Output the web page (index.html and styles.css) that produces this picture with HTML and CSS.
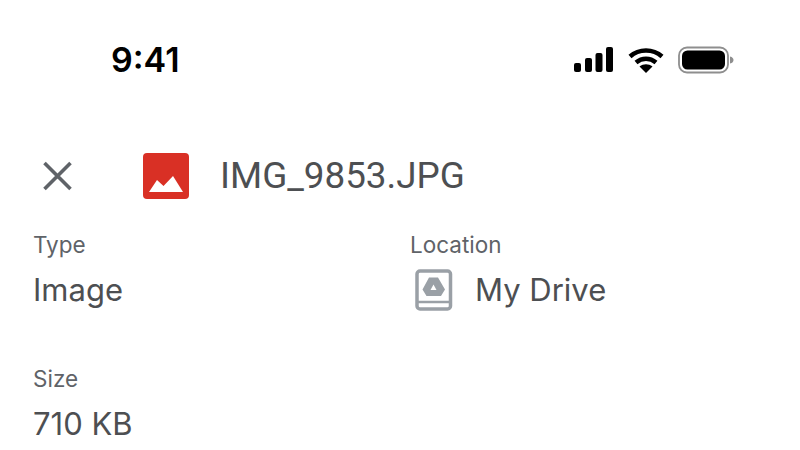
FILE: index.html
```html
<!DOCTYPE html>
<html lang="en">
<head>
<meta charset="utf-8">
<title>File details</title>
<link rel="stylesheet" href="styles.css">
</head>
<body>
<div class="screen">
  <div class="status">
    <span class="time">9:41</span>
    <div class="status-icons">
      <svg class="signal" width="40" height="26" viewBox="0 0 40 26"><rect x="0" y="16" width="7" height="9" rx="2"/><rect x="11" y="11" width="7" height="14" rx="2"/><rect x="21.500" y="6" width="7" height="19" rx="2"/><rect x="32" y="0" width="7" height="25" rx="2"/></svg>
      <svg class="wifi" width="36" height="26" viewBox="0 0 36 26"><path d="M2 9.500C11 1.500 25 1.500 34 9.500" fill="none" stroke="#000" stroke-width="4.500"/><path d="M8 15.500C14 10.500 22 10.500 28 15.500" fill="none" stroke="#000" stroke-width="4.500"/><path d="M11.500 19.500C15.500 16.500 20.500 16.500 24.500 19.500L18 26Z"/></svg>
      <svg class="battery" width="56" height="28" viewBox="0 0 56 28"><rect x="1" y="1.500" width="49" height="25" rx="8" fill="none" stroke="#8e8e8e" stroke-width="1.800"/><rect x="4" y="4.500" width="43" height="19" rx="5.500"/><path d="M52 10.500C54.500 11 55.500 12.500 55.500 14S54.500 17 52 17.500Z" fill="#8e8e8e"/></svg>
    </div>
  </div>
  <div class="header">
    <svg class="close" width="31" height="30" viewBox="0 0 31 30"><path d="M2.500 2L28.500 28M28.500 2L2.500 28" stroke="#5f6368" stroke-width="3.600" fill="none"/></svg>
    <svg class="file-icon" width="46" height="46" viewBox="0 0 46 46"><rect width="46" height="46" rx="4" fill="#d93025"/><path d="M6 39L14 27L20.500 33L30 23L40 39Z" fill="#fff"/></svg>
    <span class="file-name">IMG_9853.JPG</span>
  </div>
  <div class="details">
    <div class="field">
      <div class="label">Type</div>
      <div class="value">Image</div>
    </div>
    <div class="field">
      <div class="label">Location</div>
      <div class="value location">
        <svg class="drive" width="38" height="42" viewBox="0 0 38 42"><rect x="2" y="2" width="33.500" height="38" rx="3" fill="none" stroke="#9aa0a6" stroke-width="3.500"/><path d="M3 33H35" stroke="#9aa0a6" stroke-width="2.500"/><path d="M14 8.500H23L30 20.500L26 27H11.500L7.500 20.500ZM18.500 15.500L15.500 21H21.500Z" fill="#9aa0a6" fill-rule="evenodd"/></svg>
        <span>My Drive</span>
      </div>
    </div>
    <div class="field">
      <div class="label">Size</div>
      <div class="value">710 KB</div>
    </div>
  </div>
</div>
</body>
</html>
```
FILE: styles.css
```css
* { box-sizing: border-box; }
html, body { margin: 0; padding: 0; }
body {
  width: 800px;
  height: 450px;
  overflow: hidden;
  background: #fff;
  font-family: "Inter", "Liberation Sans", sans-serif;
}
.screen { display: flex; flex-direction: column; }
.status {
  height: 58px;
  margin-top: 31px;
  padding: 0 66px 0 111px;
  display: flex;
  align-items: center;
  justify-content: space-between;
}
.time {
  font-size: 34px;
  font-weight: 600;
  color: #000;
  line-height: 58px;
}
.status-icons { display: flex; align-items: center; gap: 14px; }
.header {
  display: flex;
  align-items: center;
  height: 46px;
  margin-top: 64px;
  padding-left: 42px;
}
.close { margin-right: 70px; }
.file-icon { margin-right: 31px; }
.file-name {
  font-family: "Roboto", "Liberation Sans", sans-serif;
  font-size: 36.800px;
  color: #4d4f52;
  line-height: 46px;
}
.details {
  display: grid;
  grid-template-columns: 377px 1fr;
  row-gap: 53px;
  padding-left: 33px;
  margin-top: 32px;
}
.label {
  font-size: 22.500px;
  font-weight: 400;
  color: #5f6368;
  line-height: 28px;
}
.value {
  font-size: 31px;
  color: #4d4f52;
  line-height: 44px;
  margin-top: 9px;
}
.location { display: flex; align-items: center; gap: 22px; margin-left: 5px; height: 44px; }
```
